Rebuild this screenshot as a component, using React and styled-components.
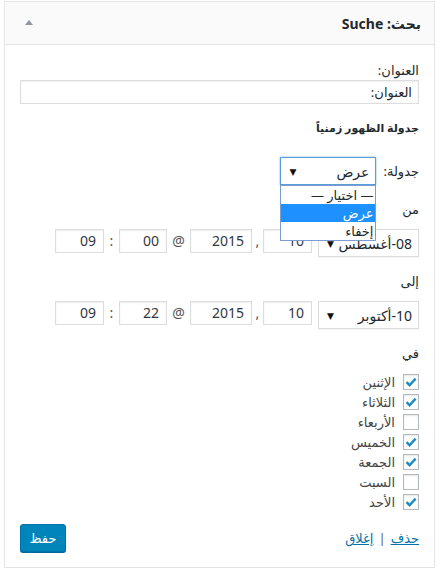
import React from 'react';
import styled, { createGlobalStyle } from 'styled-components';

const GlobalStyle = createGlobalStyle`
  body {
    margin: 0;
    background: #fff;
    font-family: "Noto Sans", "DejaVu Sans", sans-serif;
    color: #23282d;
  }
`;

const days = [
  { name: 'الإثنين', on: true },
  { name: 'الثلاثاء', on: true },
  { name: 'الأربعاء', on: false },
  { name: 'الخميس', on: true },
  { name: 'الجمعة', on: true },
  { name: 'السبت', on: false },
  { name: 'الأحد', on: true },
];

const Check = () => (
  <svg width="12" height="10" viewBox="0 0 12 10">
    <path d="M1.5 5.2 L4.6 8.2 L10.6 1.6" fill="none" stroke="#1e8cbe" strokeWidth="2.4" />
  </svg>
);

const DateRow = ({ month, day, year, minute, hour }) => (
  <DateLine>
    <MonthSelect>
      <span>{month}</span>
      <Arrow>▼</Arrow>
    </MonthSelect>
    <NumBox $w={49}>{day}</NumBox>
    <Sep $w={11}>,</Sep>
    <NumBox $w={62}>{year}</NumBox>
    <Sep $w={23}>@</Sep>
    <NumBox $w={48}>{minute}</NumBox>
    <Sep $w={15}>:</Sep>
    <NumBox $w={49}>{hour}</NumBox>
  </DateLine>
);

const App = () => (
  <>
    <GlobalStyle />
    <Panel dir="rtl">
      <Header>
        <HeaderTitle>بحث: Suche</HeaderTitle>
        <Toggle />
      </Header>
      <Body>
        <Label>العنوان:</Label>
        <TextInput>العنوان:</TextInput>
        <SubTitle>جدولة الظهور زمنياً</SubTitle>
        <ScheduleRow>
          <Label>جدولة:</Label>
          <SelectWrap>
            <Select>
              <span>عرض</span>
              <Arrow>▼</Arrow>
            </Select>
            <OptionList>
              <Option>— اختيار —</Option>
              <Option $active>عرض</Option>
              <Option>إخفاء</Option>
            </OptionList>
          </SelectWrap>
        </ScheduleRow>
        <SectionLabel $top={15}>من</SectionLabel>
        <DateRow month="08-أغسطس" day="10" year="2015" minute="00" hour="09" />
        <SectionLabel $top={15}>إلى</SectionLabel>
        <DateRow month="10-أكتوبر" day="10" year="2015" minute="22" hour="09" />
        <SectionLabel $top={15}>في</SectionLabel>
        <DayList>
          {days.map((d) => (
            <DayRow key={d.name}>
              <Box>{d.on && <Check />}</Box>
              <span>{d.name}</span>
            </DayRow>
          ))}
        </DayList>
        <Actions>
          <Links>
            <Link>حذف</Link>
            <Bar>|</Bar>
            <Link>إغلاق</Link>
          </Links>
          <SaveButton>حفظ</SaveButton>
        </Actions>
      </Body>
    </Panel>
  </>
);

const Panel = styled.div`
  margin: 1px 5px 0 4px;
  border: 1px solid #e5e5e5;
  background: #fff;
  box-shadow: 0 1px 1px rgba(0, 0, 0, 0.04);
`;

const Header = styled.div`
  display: flex;
  align-items: center;
  justify-content: space-between;
  height: 42px;
  padding: 0 13px 0 20px;
  background: #fafafa;
  border-bottom: 1px solid #e5e5e5;
`;

const HeaderTitle = styled.div`
  font-size: 14px;
  font-weight: bold;
  color: #23282d;
`;

const Toggle = styled.div`
  width: 0;
  height: 0;
  border-left: 4px solid transparent;
  border-right: 4px solid transparent;
  border-bottom: 5px solid #8f959b;
  margin-top: -2px;
`;

const Body = styled.div`
  padding: 16px 15px 15px;
  font-size: 13px;
`;

const Label = styled.div`
  line-height: 18px;
  color: #23282d;
`;

const TextInput = styled.div`
  margin-top: 1px;
  height: 22px;
  line-height: 22px;
  padding: 0 6px;
  border: 1px solid #ddd;
  box-shadow: inset 0 1px 2px rgba(0, 0, 0, 0.07);
  font-size: 13px;
`;

const SubTitle = styled.div`
  margin-top: 16px;
  font-size: 11px;
  font-weight: bold;
  line-height: 16px;
`;

const ScheduleRow = styled.div`
  display: flex;
  align-items: center;
  gap: 7px;
  margin-top: 21px;
`;

const SelectWrap = styled.div`
  position: relative;
`;

const Select = styled.div`
  display: flex;
  align-items: center;
  justify-content: space-between;
  box-sizing: border-box;
  width: 96px;
  height: 28px;
  padding: 0 6px 0 8px;
  border: 1px solid #5b9dd9;
  box-shadow: 0 0 2px rgba(30, 140, 190, 0.6);
  font-size: 14px;
`;

const Arrow = styled.span`
  font-size: 9px;
  color: #111;
`;

const OptionList = styled.div`
  position: absolute;
  top: 28px;
  right: 0;
  width: 96px;
  box-sizing: border-box;
  border: 1px solid #7a9cd3;
  background: #fff;
  z-index: 2;
`;

const Option = styled.div`
  height: 18px;
  line-height: 18px;
  padding: 0 2px;
  font-size: 13px;
  background: ${(p) => (p.$active ? '#1e90ff' : '#fff')};
  color: ${(p) => (p.$active ? '#fff' : '#23282d')};
`;

const SectionLabel = styled.div`
  margin-top: ${(p) => p.$top}px;
  line-height: 18px;
`;

const DateLine = styled.div`
  display: flex;
  align-items: flex-start;
  margin-top: 11px;
`;

const MonthSelect = styled.div`
  display: flex;
  align-items: center;
  justify-content: space-between;
  box-sizing: border-box;
  width: 101px;
  height: 28px;
  margin-left: 6px;
  padding: 0 6px 0 8px;
  border: 1px solid #ddd;
  box-shadow: 0 1px 1px rgba(0, 0, 0, 0.04);
  font-size: 14px;
`;

const NumBox = styled.div`
  box-sizing: border-box;
  width: ${(p) => p.$w}px;
  height: 24px;
  line-height: 22px;
  padding: 0 7px;
  border: 1px solid #ddd;
  box-shadow: inset 0 1px 2px rgba(0, 0, 0, 0.07);
  font-size: 14px;
  color: #32373c;
`;

const Sep = styled.span`
  width: ${(p) => p.$w}px;
  text-align: center;
  line-height: 24px;
  font-size: 14px;
  color: #555;
`;

const DayList = styled.div`
  margin-top: 10px;
`;

const DayRow = styled.div`
  display: flex;
  align-items: center;
  gap: 8px;
  height: 20px;
  font-size: 13px;
  color: #444;
`;

const Box = styled.span`
  display: flex;
  align-items: center;
  justify-content: center;
  box-sizing: border-box;
  width: 16px;
  height: 16px;
  border: 1px solid #b4b9be;
  background: #fff;
  box-shadow: inset 0 1px 2px rgba(0, 0, 0, 0.1);
`;

const Actions = styled.div`
  display: flex;
  align-items: center;
  justify-content: space-between;
  margin-top: 12px;
`;

const Links = styled.div`
  display: flex;
  align-items: center;
  gap: 5px;
  font-size: 13px;
`;

const Link = styled.a`
  color: #0073aa;
  text-decoration: underline;
  cursor: pointer;
`;

const Bar = styled.span`
  color: #555d66;
`;

const SaveButton = styled.button`
  box-sizing: border-box;
  width: 46px;
  height: 28px;
  padding: 0;
  border: 1px solid #0073aa;
  border-radius: 3px;
  background: #0085ba;
  box-shadow: 0 1px 0 #006799;
  color: #fff;
  font-family: "Noto Sans", "DejaVu Sans", sans-serif;
  font-size: 13px;
`;

export default App;
